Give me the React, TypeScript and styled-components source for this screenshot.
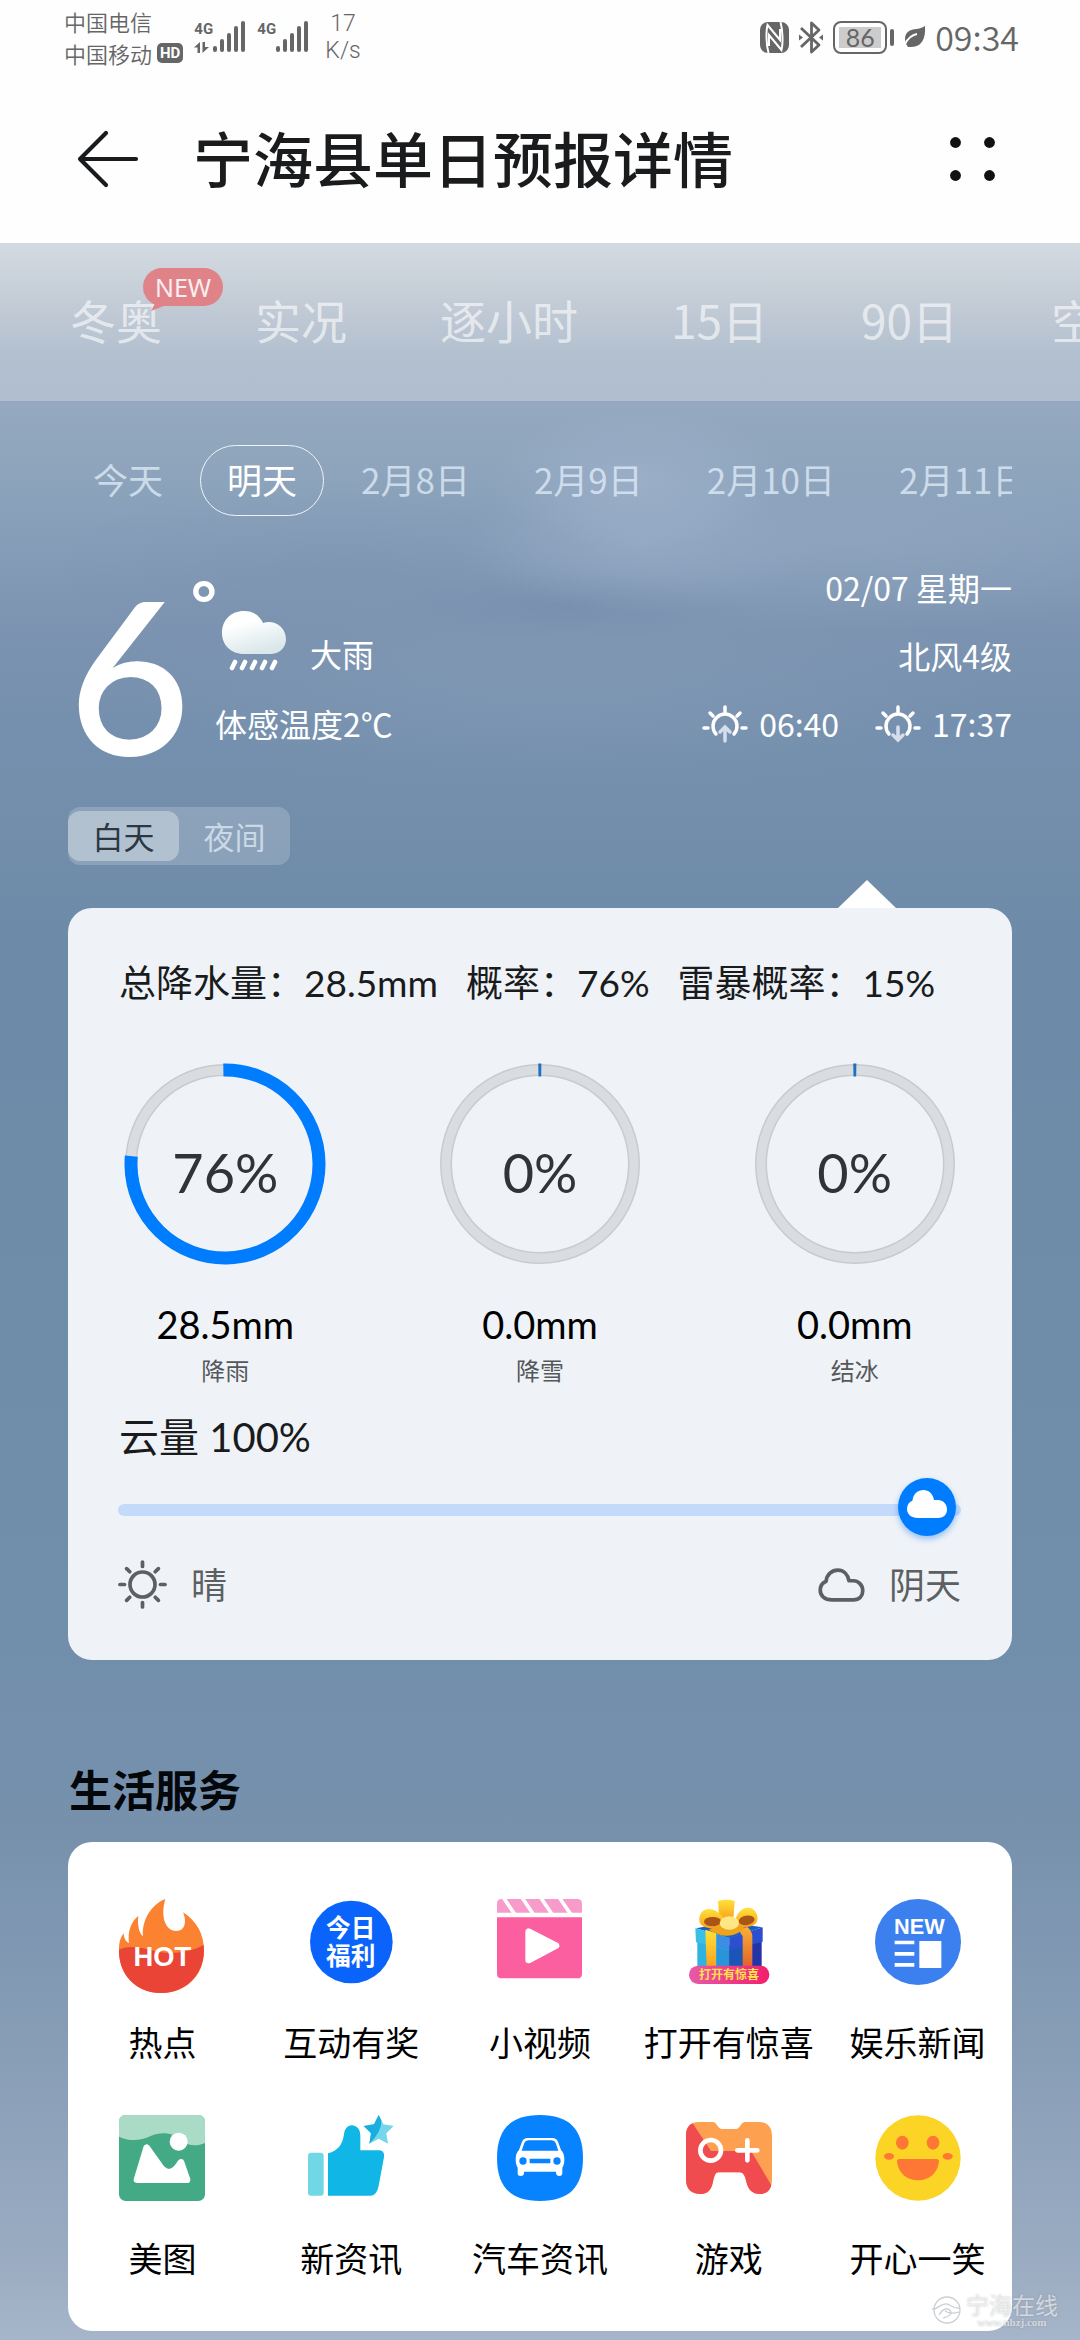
import React, { useState } from 'react';
import styled, { createGlobalStyle } from 'styled-components';

const GlobalStyle = createGlobalStyle`
  *, *::before, *::after { box-sizing: border-box; }
  body {
    margin: 0;
    background: #fefefe;
    font-family: 'Noto Sans CJK SC', sans-serif;
    color: #191b1d;
  }
  button { font: inherit; color: inherit; background: none; border: 0; padding: 0; margin: 0; cursor: pointer; }
  h1, h2, h3, p { margin: 0; }
  svg { display: block; flex: none; overflow: visible; }
`;

const Page = styled.div`
  position: relative;
  overflow: hidden;
`;

/* ---------- system status bar ---------- */

const StatusBar = styled.div`
  display: flex;
  justify-content: space-between;
  align-items: flex-start;
  height: 70px;
  padding: 5px 61px 0 64px;
  color: #666;
  background: #fefefe;
`;

const StatusGroup = styled.div<{ $gap: number }>`
  display: flex;
  align-items: center;
  gap: ${(p) => p.$gap}px;
  height: 64px;
`;

const Carriers = styled.div`
  font: 350 22px/32px 'Noto Sans CJK SC', sans-serif;
`;

const CarrierLine = styled.div`
  display: flex;
  align-items: center;
  gap: 5px;
`;

const HdBadge = styled.span`
  padding: 0 3px;
  border-radius: 5px;
  background: #666;
  color: #fff;
  font: 700 15px/20px Roboto, sans-serif;
`;

const Signal = styled.div`
  display: flex;
  height: 32px;
`;

const SignalKind = styled.div`
  display: flex;
  flex-direction: column;
  justify-content: space-between;
  width: 19px;
  font: 700 15px/16px Roboto, sans-serif;
`;

const Speed = styled.div`
  margin-left: 5px;
  text-align: center;
  font: 300 23px/27px Roboto, sans-serif;
`;

const Battery = styled.div`
  display: flex;
  align-items: center;
  gap: 3px;
  &::after { content: ''; width: 4px; height: 17px; border-radius: 2px; background: #666; }
`;

const BatteryBody = styled.div`
  width: 54px;
  height: 33px;
  padding: 4px;
  border: 2px solid #666;
  border-radius: 8px;
`;

const BatteryLevel = styled.div`
  background: #ccc;
  text-align: center;
  font: 400 25px/21px Lato, sans-serif;
`;

const Clock = styled.span`
  font: 350 34px/40px 'Noto Sans CJK SC', sans-serif;
`;

/* ---------- title bar ---------- */

const TitleBar = styled.header`
  display: flex;
  align-items: center;
  height: 173px;
  padding: 5px 85px 0 78px;
  background: #fefefe;
`;

const Title = styled.h1`
  flex: 1;
  margin: 0 0 0 54px;
  padding-bottom: 4px;
  font: 500 60px/80px 'Noto Sans CJK SC', sans-serif;
`;

/* ---------- weather backdrop ---------- */

const Sky = styled.main`
  padding-bottom: 9px;
  background:
    radial-gradient(ellipse 150px 70px at 640px 235px, rgba(170, 186, 212, 0.45), rgba(170, 186, 212, 0)),
    radial-gradient(ellipse 180px 70px at 640px 300px, rgba(160, 180, 205, 0.45), rgba(160, 180, 205, 0)),
    radial-gradient(ellipse 190px 36px at 570px 362px, rgba(106, 130, 168, 0.3), rgba(106, 130, 168, 0)),
    radial-gradient(ellipse 380px 90px at 850px 300px, rgba(155, 175, 200, 0.34), rgba(155, 175, 200, 0)),
    radial-gradient(ellipse 440px 110px at 560px 440px, rgba(145, 165, 190, 0.28), rgba(145, 165, 190, 0)),
    radial-gradient(ellipse 300px 90px at 340px 330px, rgba(112, 136, 168, 0.2), rgba(112, 136, 168, 0)),
    linear-gradient(180deg, #a6b4c3 0, #9caaba 50px, #8da1b8 110px, #95a8bf 160px, #8fa6bd 210px,
      #879eb9 290px, #7b93b0 390px, #7590ae 480px, #728eab 580px, #6d8aa8 700px, #6f8ca9 1100px,
      #718eaa 1400px, #7791ad 1590px, #879db6 1800px, #99abc1 2010px, #a6b5c9 2097px);
`;

const Tabs = styled.nav`
  display: flex;
  align-items: center;
  gap: 93px;
  height: 158px;
  padding: 0 0 6px 70px;
  overflow: hidden;
  background: linear-gradient(180deg, rgba(255, 255, 255, 0.5), rgba(255, 255, 255, 0.26));
`;

const Tab = styled.button`
  position: relative;
  flex: none;
  color: rgba(255, 255, 255, 0.62);
  font-size: 46px;
  line-height: 64px;
`;

const NewBadge = styled.span`
  position: absolute;
  left: 73px;
  top: -19px;
  width: 80px;
  border-radius: 19px;
  background: #df8389;
  color: #fbeef0;
  font: 400 25px/38px 'Noto Sans', sans-serif;
  text-align: center;
  &::after {
    content: '';
    position: absolute;
    left: 8px;
    top: 34px;
    width: 16px;
    height: 9px;
    background: inherit;
    clip-path: polygon(0 100%, 30% 0, 100% 30%);
  }
`;

const Dates = styled.div`
  display: flex;
  gap: 10px;
  margin: 44px 68px 0 66px;
  overflow: hidden;
`;

const DatePill = styled.button<{ $active: boolean }>`
  flex: none;
  padding: 0 26px 4px;
  border: 1px solid ${(p) => (p.$active ? '#eef3f8' : 'transparent')};
  border-radius: 36px;
  color: ${(p) => (p.$active ? '#fff' : 'rgba(226, 238, 250, 0.75)')};
  font-size: 35px;
  line-height: 65px;
`;

/* ---------- headline conditions ---------- */

const Hero = styled.section`
  display: flex;
  justify-content: space-between;
  margin: 37px 68px 0;
  color: #fff;
  font-size: 32px;
  line-height: 68px;
`;

const Now = styled.div`
  display: flex;
  align-items: flex-start;
`;

const Temperature = styled.div`
  display: flex;
  align-items: flex-start;
  height: 204px;
  font-family: Lato, sans-serif;
  font-weight: 500;
  font-size: 212px;
  line-height: 240px;
`;

const Degree = styled.span`
  width: 24px;
  font-weight: 700;
  font-size: 62px;
  line-height: 98px;
`;

const Details = styled.div`
  padding-top: 58px;
`;

const Condition = styled.div`
  display: flex;
  gap: 24px;
  height: 62px;
  margin: 0 0 16px 7px;
  line-height: 40px;
  & > span { align-self: flex-end; }
`;

const Facts = styled.div`
  display: flex;
  flex-direction: column;
  align-items: flex-end;
`;

const SunTimes = styled.div`
  display: flex;
  gap: 36px;
`;

const SunTime = styled.span`
  display: flex;
  align-items: center;
  gap: 11px;
`;

const Segmented = styled.div`
  display: inline-flex;
  align-items: center;
  height: 58px;
  margin: 50px 68px 0;
  border-radius: 12px;
  background: rgba(255, 255, 255, 0.18);
  vertical-align: top;
`;

const Segment = styled.button<{ $active: boolean }>`
  width: 111px;
  border-radius: 12px;
  background: ${(p) => (p.$active ? '#b2c1d0' : 'transparent')};
  color: ${(p) => (p.$active ? '#2c3742' : 'rgba(225, 235, 246, 0.75)')};
  font-size: 31px;
  line-height: 50px;
`;

/* ---------- rainfall card ---------- */

const Card = styled.section`
  position: relative;
  margin: 43px 68px 0;
  padding: 52px 0 51px;
  border-radius: 24px;
  background: #eff3f7;
  font-family: Lato, 'Noto Sans CJK SC', sans-serif;
  &::before {
    content: '';
    position: absolute;
    right: 116px;
    top: -28px;
    width: 58px;
    height: 28px;
    background: #fff;
    clip-path: polygon(50% 0, 100% 100%, 0 100%);
  }
`;

const Summary = styled.div`
  display: flex;
  gap: 28px;
  padding-left: 51px;
  font-size: 37px;
  line-height: 46px;
  white-space: nowrap;
`;

const Gauges = styled.div`
  display: grid;
  grid-template-columns: repeat(3, 1fr);
  margin-top: 57px;
`;

const Gauge = styled.div`
  display: flex;
  flex-direction: column;
  align-items: center;
`;

const Dial = styled.div`
  display: grid;
  place-items: center;
  & > * { grid-area: 1 / 1; }
`;

const DialText = styled.span`
  padding-top: 18px;
  color: #303437;
  font-size: 54px;
  line-height: 60px;
`;

const Amount = styled.div`
  margin-top: 37px;
  color: #000;
  font-size: 38px;
  line-height: 44px;
`;

const Kind = styled.div`
  margin-top: 10px;
  color: #55585b;
  font-size: 24px;
  line-height: 30px;
`;

const CloudCover = styled.div`
  margin: 28px 51px 0 50px;
`;

const CloudLabel = styled.label`
  display: block;
  padding-left: 1px;
  font-size: 40px;
  line-height: 46px;
`;

const Slider = styled.div`
  position: relative;
  height: 58px;
  margin-top: 18px;
  padding-right: 5px;
  &::before {
    content: '';
    position: absolute;
    inset: 26px 0 20px;
    border-radius: 6px;
    background: #c3dafa;
  }
`;

const Range = styled.input`
  position: relative;
  display: block;
  width: 100%;
  height: 58px;
  margin: 0;
  appearance: none;
  background: transparent;
  &::-webkit-slider-thumb {
    appearance: none;
    width: 58px;
    height: 58px;
    border-radius: 50%;
    background: #007dff;
    box-shadow: 0 3px 6px rgba(0, 110, 240, 0.4);
  }
`;

const KnobIcon = styled.span`
  position: absolute;
  top: 12px;
  width: 58px;
  padding-left: 9px;
  pointer-events: none;
`;

const Legend = styled.div`
  display: flex;
  justify-content: space-between;
  margin-top: 24px;
  color: #5c6062;
  font-size: 36px;
  line-height: 48px;
`;

const LegendItem = styled.span`
  display: flex;
  align-items: center;
  gap: 24px;
`;

/* ---------- services ---------- */

const SectionTitle = styled.h2`
  margin: 100px 69px 26px;
  color: #05080b;
  font-size: 43px;
  font-weight: 700;
  line-height: 56px;
`;

const Services = styled.section`
  display: grid;
  grid-template-columns: repeat(5, 1fr);
  row-gap: 53px;
  margin: 0 68px;
  padding: 57px 0 53px;
  border-radius: 24px;
  background: #fff;
`;

const Service = styled.a`
  display: flex;
  flex-direction: column;
  align-items: center;
  gap: 37px;
  color: #000;
  font-size: 34px;
  line-height: 40px;
  text-decoration: none;
  white-space: nowrap;
`;

const Watermark = styled.div`
  position: absolute;
  right: 22px;
  bottom: 12px;
  display: flex;
  align-items: center;
  gap: 4px;
  color: rgba(255, 255, 255, 0.6);
  text-shadow: 0 0 2px rgba(120, 125, 130, 0.5);
  text-align: center;
  font: 400 23px/24px 'Noto Sans CJK SC', sans-serif;
`;

const WatermarkUrl = styled.div`
  font: 700 11px/12px 'Liberation Serif', serif;
`;

/* ---------- drawings ---------- */

const Bars = () => (
  <svg width="33" height="32" viewBox="0 0 33 32" fill="#666">
    {[6, 13, 19, 26, 31].map((h, i) => (
      <rect key={h} x={i * 7} y={31 - h} width="4" height={h} rx="2" />
    ))}
  </svg>
);

const DataArrows = () => (
  <svg width="15" height="11" viewBox="0 0 15 11" fill="#666">
    <path d="M6 0V11H3.5V5.5H0Z" />
    <path d="M8.5 0H11V5H15L8.5 11Z" />
  </svg>
);

const NfcIcon = () => (
  <svg width="29" height="31" viewBox="0 0 29 31">
    <rect width="29" height="31" rx="8" fill="#666" />
    <path d="M8.500 31C6 22 6 9 7.500 3L20 18V7M20.500 0C23 9 23 22 21.500 28L9 13V24" fill="none" stroke="#fff" strokeWidth="2" />
  </svg>
);

const BluetoothIcon = () => (
  <svg width="24" height="33" viewBox="0 0 24 33" fill="none" stroke="#666" strokeWidth="2.800" strokeLinejoin="round">
    <path d="M2 7L20 24L12.500 31V2L20 9L2 26" />
    <path d="M0 13.500L4 16.500L0 19.500ZM24 13.500L20 16.500L24 19.500Z" fill="#666" stroke="none" />
  </svg>
);

const LeafIcon = () => (
  <svg width="21" height="22" viewBox="0 0 21 22">
    <path d="M21 0C22 14 17 22 4 21C-1 15 0 5 9 3.500C14 3 17 2.500 21 0Z" fill="#666" />
    <path d="M1 18C4 12 8 9 13 8" fill="none" stroke="#fff" strokeWidth="1.800" />
  </svg>
);

const BackIcon = () => (
  <svg width="61" height="56" viewBox="0 0 61 56" fill="none" stroke="#191b1d" strokeWidth="4.200" strokeLinecap="round" strokeLinejoin="round">
    <path d="M28 2L2 28L28 54M2 28H58" />
  </svg>
);

const MenuIcon = () => (
  <svg width="45" height="44" viewBox="0 0 45 44" fill="#111">
    {[5.5, 39.5].map((x) => [5.5, 38.5].map((y) => <circle key={`${x}-${y}`} cx={x} cy={y} r="5.400" />))}
  </svg>
);

const RainIcon = () => (
  <svg width="64" height="60" viewBox="0 0 64 60">
    <defs>
      <linearGradient id="cloudShade" x1="0" y1="0" x2="0.4" y2="1">
        <stop offset="0.35" stopColor="#fff" />
        <stop offset="1" stopColor="#dbe8ea" />
      </linearGradient>
    </defs>
    <path d="M22 0C32 0 38 5 41 12C52 8 64 16 64 28C64 37 57 43 48 43H22C9 43 0 34 0 22C0 9 9 0 22 0Z" fill="url(#cloudShade)" />
    <path d="M13 51L10 57M23 51L20 57M33 51L30 57M43 51L40 57M53 51L50 57" stroke="#fff" strokeWidth="4.600" strokeLinecap="round" />
  </svg>
);

const SunHorizonIcon = ({ down }: { down: boolean }) => (
  <svg width="46" height="37" viewBox="0 0 46 37" fill="none" stroke="#fff" strokeWidth="3.500" strokeLinecap="round">
    <path d="M14 29A12 12 0 1 1 32 29M23 2V7M8 8L11 11M38 8L35 11M2 23H6M40 23H44" />
    <path d={down ? 'M23 22V34M18 30L23 35L28 30' : 'M23 36V23M18 27L23 22L28 27'} stroke="#d5deea" />
  </svg>
);

const CLOUD = 'M11 28H31C37 28 40 24 40 19.500C40 14 36 10 31 10H27C26 4 22 0 16.500 0C11 0 6 4 5.500 10.500C2 12 0 15 0 19C0 24 4 28 11 28Z';

const CloudOutline = () => (
  <svg width="47" height="34" viewBox="-2 -2 44 32" fill="none" stroke="#5c6062" strokeWidth="3.500" strokeLinejoin="round">
    <path d={CLOUD} />
  </svg>
);

const SunIcon = () => (
  <svg width="49" height="49" viewBox="-24.5 -24.5 49 49" fill="none" stroke="#5c6062" strokeWidth="3.700" strokeLinecap="round">
    <circle r="12.500" />
    {[0, 45, 90, 135, 180, 225, 270, 315].map((a) => (
      <path key={a} d="M0 -18V-22.500" transform={`rotate(${a})`} />
    ))}
  </svg>
);

const CIRCUMFERENCE = 2 * Math.PI * 94;

const Ring = ({ percent }: { percent: number }) => (
  <svg width="202" height="202" viewBox="-101 -101 202 202" fill="none">
    <circle r="94" stroke="#c8cbce" strokeWidth="12" />
    <circle r="94" stroke="#d9dde0" strokeWidth="9" />
    <circle
      r="94"
      stroke={percent ? '#007dff' : '#2070c0'}
      strokeWidth="13"
      strokeDasharray={`${(CIRCUMFERENCE * percent) / 100 + 3} ${CIRCUMFERENCE}`}
      transform="rotate(-91)"
    />
  </svg>
);

const Art = ({ children }: { children: React.ReactNode }) => (
  <svg width="86" height="86" viewBox="0 0 258 258">{children}</svg>
);

const HotIcon = () => (
  <Art>
    <path d="M0 155C0 135 2 118 14 103C14 118 22 130 30 132C26 100 34 70 58 50C54 80 62 105 72 112C68 60 100 15 139 0C125 45 135 96 172 96C200 96 203 65 192 40C232 65 255 105 255 155C255 230 200 282 127 282C55 282 0 230 0 155Z" fill="#fb8230" />
    <path d="M0 152C30 138 65 145 110 157C155 168 215 160 254 138C262 220 205 282 127 282C50 282 -2 225 0 152Z" fill="#e94436" />
    <text x="130" y="202" textAnchor="middle" fill="#fff" fontFamily="Liberation Sans, sans-serif" fontWeight="700" fontSize="82">HOT</text>
  </Art>
);

const WelfareIcon = () => (
  <Art>
    <circle cx="130" cy="129" r="124" fill="#0a64fb" />
    <g fill="#fff" textAnchor="middle" fontFamily="Noto Sans CJK SC, sans-serif" fontWeight="700" fontSize="74">
      <text x="128" y="115">今日</text>
      <text x="128" y="198">福利</text>
    </g>
  </Art>
);

const VideoIcon = () => (
  <Art>
    <path d="M14 0H241Q255 0 255 14V41H0V14Q0 0 14 0Z" fill="#f79bcb" />
    <path d="M22 0L50 41M78 0L106 41M134 0L162 41M190 0L218 41" stroke="#fff" strokeWidth="11" strokeLinecap="square" />
    <path d="M0 55H255V224Q255 238 241 238H14Q0 238 0 224Z" fill="#fc5f9f" />
    <path d="M95 98V183L177 140Z" fill="#fff" stroke="#fff" strokeWidth="20" strokeLinejoin="round" />
  </Art>
);

const GiftIcon = () => (
  <Art>
    <defs>
      <linearGradient id="giftGold" x1="0" y1="0" x2="0" y2="1">
        <stop offset="0" stopColor="#ffe23a" />
        <stop offset="1" stopColor="#f8a11c" />
      </linearGradient>
      <linearGradient id="giftOrange" x1="0" y1="0" x2="0" y2="1">
        <stop offset="0" stopColor="#fbb034" />
        <stop offset="1" stopColor="#e2602c" />
      </linearGradient>
      <linearGradient id="giftBand" x1="0" y1="0" x2="1" y2="0">
        <stop offset="0" stopColor="#e85aa8" />
        <stop offset="1" stopColor="#f21f6c" />
      </linearGradient>
    </defs>
    <path d="M30 88L130 70L229 85L130 118Z" fill="#1b5fc4" />
    <path d="M34 120L130 140V204H34Z" fill="#2fb2e0" />
    <path d="M92 132L130 140V204H92Z" fill="#2a94d8" />
    <path d="M130 140L227 118V204H130Z" fill="#2433a8" />
    <path d="M130 140L172 132V204H130Z" fill="#1c55b8" />
    <path d="M28 88L130 116V154L30 130Z" fill="#38bfe6" />
    <path d="M92 106L130 116V154L92 144Z" fill="#3b8ee2" />
    <path d="M130 116L230 85V128L130 154Z" fill="#2c4fd0" />
    <path d="M58 92L90 102V204H62Z" fill="url(#giftGold)" />
    <path d="M156 90L184 84Q198 95 199 112V204H170V112Z" fill="url(#giftOrange)" />
    <path d="M96 6Q122 -2 146 6L142 62H100Z" fill="url(#giftGold)" />
    <path d="M112 56C88 22 46 20 40 56C36 86 72 96 112 80Z" fill="url(#giftGold)" />
    <path d="M150 56C166 16 208 18 214 52C220 82 186 90 150 80Z" fill="url(#giftGold)" />
    <ellipse cx="80" cy="68" rx="26" ry="14" fill="#a85516" />
    <ellipse cx="182" cy="64" rx="24" ry="14" fill="#a85516" transform="rotate(-10 182 64)" />
    <path d="M68 92Q128 130 178 88L158 76H100Z" fill="#f0a41c" />
    <ellipse cx="130" cy="72" rx="29" ry="20" fill="#ffe785" />
    <rect x="9" y="200" width="241" height="55" rx="27" fill="url(#giftBand)" />
    <text x="129" y="241" textAnchor="middle" fill="#ffe14a" fontFamily="Noto Sans CJK SC, sans-serif" fontWeight="700" fontSize="36">打开有惊喜</text>
  </Art>
);

const NewsIcon = () => (
  <Art>
    <circle cx="129" cy="129" r="129" fill="#3c80ef" />
    <text x="133" y="105" textAnchor="middle" fill="#fff" fontFamily="Liberation Sans, sans-serif" fontWeight="700" fontSize="65">NEW</text>
    <path d="M59 125H118V136H59ZM59 159H118V170H59ZM59 192H118V203H59ZM133 126H199V207H133Z" fill="#fff" />
  </Art>
);

const PictureIcon = () => (
  <Art>
    <rect width="258" height="258" rx="20" fill="#44aa86" />
    <path d="M20 0H238Q258 0 258 20V84C230 96 205 92 185 74C160 52 125 50 95 63C65 78 30 80 0 65V20Q0 0 20 0Z" fill="#a9dbc7" />
    <circle cx="179" cy="80" r="27" fill="#fff" />
    <path d="M83 98L54 194H204L186 142Q168 172 150 172Q132 170 120 150Z" fill="#fff" stroke="#fff" strokeWidth="20" strokeLinejoin="round" />
  </Art>
);

const ThumbIcon = () => (
  <Art>
    <rect y="113" width="47" height="129" rx="9" fill="#70d8e4" />
    <path d="M60 115C90 108 104 88 108 58C110 38 122 31 133 31C150 33 157 46 157 62V106H212C224 106 230 114 228 126L212 212C208 232 200 242 186 242H60Z" fill="#10b6e6" />
    <path d="M212 0L226 28L257 33L235 55L240 86L212 71L184 86L189 55L167 33L198 28Z" fill="#74d6ea" />
    <path d="M212 0L220 16Q222 50 184 86L189 55L167 33L198 28Z" fill="#18aee0" />
  </Art>
);

const CarIcon = () => (
  <Art>
    <path d="M129 0C216 0 258 42 258 129S216 258 129 258 0 216 0 129 42 0 129 0Z" fill="#0783ff" />
    <path d="M92 69H166Q178 69 183 80L192 105Q202 115 202 132Q202 150 196 158V174Q196 183 187 183T177 174V170H81V174Q81 183 71 183T62 174V158Q56 150 56 132Q56 115 66 105L75 80Q80 69 92 69Z" fill="#fff" />
    <path d="M94 76H164Q173 76 176 84L184 107H74L82 84Q85 76 94 76ZM98 131H160V145H98Z" fill="#0783ff" />
    <circle cx="78" cy="138" r="11" fill="#0783ff" />
    <circle cx="180" cy="138" r="11" fill="#0783ff" />
  </Art>
);

const PAD = 'M0 60C0 35 15 21 38 21H80C92 21 96 42 108 42H150C162 42 164 21 178 21H220C245 21 258 38 258 62V192C258 222 245 237 222 237C198 237 186 222 181 200C176 180 172 172 160 172H98C88 172 86 180 81 200C76 225 65 237 42 237C18 237 0 222 0 195Z';

const GameIcon = () => (
  <Art>
    <defs>
      <clipPath id="padClip"><path d={PAD} /></clipPath>
    </defs>
    <path d={PAD} fill="#fda04f" />
    <path d="M0 0L22 28L75 108H195L258 214V258H0Z" fill="#f04b4e" clipPath="url(#padClip)" />
    <circle cx="74" cy="106" r="31" fill="none" stroke="#fff" strokeWidth="14" />
    <path d="M184 76V136M154 106H214" stroke="#fff" strokeWidth="14" strokeLinecap="round" />
  </Art>
);

const SmileIcon = () => (
  <Art>
    <circle cx="129" cy="129" r="128" fill="#fcd426" />
    <g fill="#fe7734">
      <ellipse cx="82" cy="83" rx="19" ry="21" />
      <ellipse cx="174" cy="83" rx="19" ry="21" />
      <ellipse cx="42" cy="124" rx="15" ry="10" />
      <ellipse cx="218" cy="124" rx="15" ry="10" />
      <path d="M74 132H184Q193 132 192 141C187 175 162 196 129 196S71 175 66 141Q65 132 74 132Z" />
    </g>
  </Art>
);

const WatermarkLogo = () => (
  <svg width="31" height="29" viewBox="0 0 31 29" fill="none" stroke="rgba(190,195,200,0.8)" strokeWidth="1.300">
    <circle cx="16" cy="14" r="13" />
    <path d="M1 13C7 14 9 7 16 8C20 9 22 13 29 12M8 19C12 12 18 11 20 16C21 20 15 21 12 22M14 15C17 17 22 18 28 16" />
  </svg>
);

/* ---------- data ---------- */

const TABS = ['冬奥', '实况', '逐小时', '15日', '90日', '空气'];
const DATES = ['今天', '明天', '2月8日', '2月9日', '2月10日', '2月11日'];
const GAUGES = [
  { percent: 76, amount: '28.5mm', kind: '降雨' },
  { percent: 0, amount: '0.0mm', kind: '降雪' },
  { percent: 0, amount: '0.0mm', kind: '结冰' },
];
const SERVICES = [
  { name: '热点', Icon: HotIcon },
  { name: '互动有奖', Icon: WelfareIcon },
  { name: '小视频', Icon: VideoIcon },
  { name: '打开有惊喜', Icon: GiftIcon },
  { name: '娱乐新闻', Icon: NewsIcon },
  { name: '美图', Icon: PictureIcon },
  { name: '新资讯', Icon: ThumbIcon },
  { name: '汽车资讯', Icon: CarIcon },
  { name: '游戏', Icon: GameIcon },
  { name: '开心一笑', Icon: SmileIcon },
];

export default function App() {
  const [date, setDate] = useState('明天');
  const [period, setPeriod] = useState('白天');
  const [cover, setCover] = useState(100);

  return (
    <Page>
      <GlobalStyle />
      <StatusBar>
        <StatusGroup $gap={11}>
          <Carriers>
            <CarrierLine>中国电信</CarrierLine>
            <CarrierLine>中国移动<HdBadge>HD</HdBadge></CarrierLine>
          </Carriers>
          <Signal><SignalKind>4G<DataArrows /></SignalKind><Bars /></Signal>
          <Signal><SignalKind>4G</SignalKind><Bars /></Signal>
          <Speed>17<br />K/s</Speed>
        </StatusGroup>
        <StatusGroup $gap={10}>
          <NfcIcon />
          <BluetoothIcon />
          <Battery><BatteryBody><BatteryLevel>86</BatteryLevel></BatteryBody></Battery>
          <LeafIcon />
          <Clock>09:34</Clock>
        </StatusGroup>
      </StatusBar>

      <TitleBar>
        <button aria-label="返回"><BackIcon /></button>
        <Title>宁海县单日预报详情</Title>
        <button aria-label="菜单"><MenuIcon /></button>
      </TitleBar>

      <Sky>
        <Tabs>
          {TABS.map((t, i) => (
            <Tab key={t}>{t}{i === 0 && <NewBadge>NEW</NewBadge>}</Tab>
          ))}
        </Tabs>

        <Dates>
          {DATES.map((d) => (
            <DatePill key={d} $active={d === date} onClick={() => setDate(d)}>{d}</DatePill>
          ))}
        </Dates>

        <Hero>
          <Now>
            <Temperature>6<Degree>°</Degree></Temperature>
            <Details>
              <Condition><RainIcon /><span>大雨</span></Condition>
              <p>体感温度2℃</p>
            </Details>
          </Now>
          <Facts>
            <p>02/07 星期一</p>
            <p>北风4级</p>
            <SunTimes>
              <SunTime><SunHorizonIcon down={false} />06:40</SunTime>
              <SunTime><SunHorizonIcon down />17:37</SunTime>
            </SunTimes>
          </Facts>
        </Hero>

        <Segmented>
          {['白天', '夜间'].map((s) => (
            <Segment key={s} $active={s === period} aria-pressed={s === period} onClick={() => setPeriod(s)}>{s}</Segment>
          ))}
        </Segmented>

        <Card>
          <Summary>
            <span>总降水量：28.5mm</span>
            <span>概率：76%</span>
            <span>雷暴概率：15%</span>
          </Summary>
          <Gauges>
            {GAUGES.map((g) => (
              <Gauge key={g.kind}>
                <Dial><Ring percent={g.percent} /><DialText>{g.percent}%</DialText></Dial>
                <Amount>{g.amount}</Amount>
                <Kind>{g.kind}</Kind>
              </Gauge>
            ))}
          </Gauges>
          <CloudCover>
            <CloudLabel htmlFor="cover">云量 {cover}%</CloudLabel>
            <Slider>
              <Range id="cover" type="range" min="0" max="100" value={cover} onChange={(e) => setCover(Number(e.target.value))} />
              <KnobIcon style={{ left: `calc((100% - 63px) * ${cover / 100})` }}>
                <svg width="40" height="28" viewBox="0 0 40 28" fill="#fff"><path d={CLOUD} /></svg>
              </KnobIcon>
            </Slider>
            <Legend>
              <LegendItem><SunIcon />晴</LegendItem>
              <LegendItem><CloudOutline />阴天</LegendItem>
            </Legend>
          </CloudCover>
        </Card>

        <SectionTitle>生活服务</SectionTitle>
        <Services>
          {SERVICES.map(({ name, Icon }) => (
            <Service key={name} href="#"><Icon />{name}</Service>
          ))}
        </Services>
      </Sky>

      <Watermark>
        <WatermarkLogo />
        <div>
          宁海在线
          <WatermarkUrl>www.nhzj.com</WatermarkUrl>
        </div>
      </Watermark>
    </Page>
  );
}
